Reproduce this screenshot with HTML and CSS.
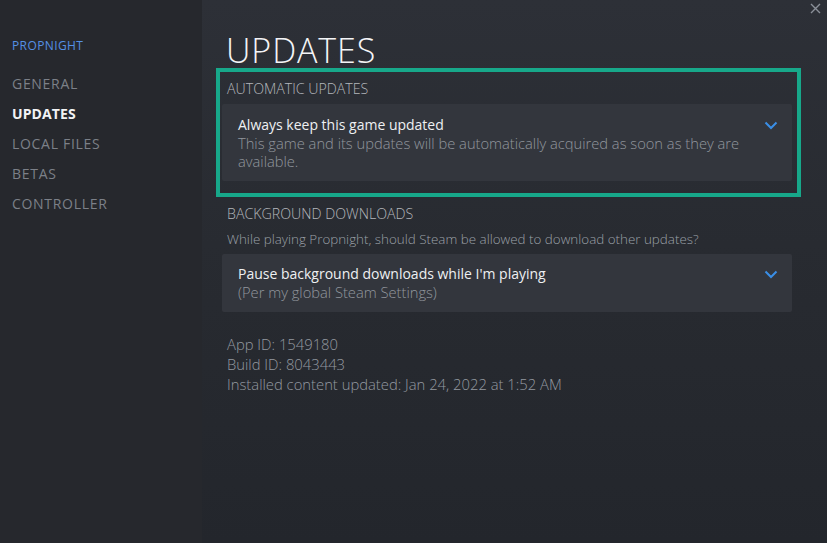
FILE: index.html
```html
<!DOCTYPE html>
<html>

<head>
  <title>Propnight - Properties</title>
  <link rel="stylesheet" href="styles.css">
</head>

<body>
  <div class="window">
    <aside class="sidebar">
      <div class="game-title">PROPNIGHT</div>
      <ul class="nav">
        <li>GENERAL</li>
        <li class="active">UPDATES</li>
        <li>LOCAL FILES</li>
        <li>BETAS</li>
        <li>CONTROLLER</li>
      </ul>
    </aside>

    <main class="content">
      <button class="close" title="Close">
        <svg width="11" height="11" viewBox="0 0 11 11">
          <path d="M1 1 L10 10 M10 1 L1 10" stroke="#8b9099" stroke-width="1.4" fill="none" />
        </svg>
      </button>

      <h1>UPDATES</h1>

      <!-- highlighted section -->
      <section class="highlight">
        <div class="section-label">AUTOMATIC UPDATES</div>
        <div class="dropdown">
          <div class="dropdown-text">
            <div class="option-title">Always keep this game updated</div>
            <div class="option-desc">This game and its updates will be automatically acquired as soon as they are available.</div>
          </div>
          <svg class="chevron" width="14" height="9" viewBox="0 0 14 9">
            <path d="M1.5 1.5 L7 7 L12.5 1.5" stroke="#3a8ee6" stroke-width="2" fill="none" />
          </svg>
        </div>
      </section>

      <section class="plain">
        <div class="section-label">BACKGROUND DOWNLOADS</div>
        <div class="section-help">While playing Propnight, should Steam be allowed to download other updates?</div>
        <div class="dropdown short">
          <div class="dropdown-text">
            <div class="option-title">Pause background downloads while I'm playing</div>
            <div class="option-desc">(Per my global Steam Settings)</div>
          </div>
          <svg class="chevron" width="14" height="9" viewBox="0 0 14 9">
            <path d="M1.5 1.5 L7 7 L12.5 1.5" stroke="#3a8ee6" stroke-width="2" fill="none" />
          </svg>
        </div>
      </section>

      <div class="info">
        <div>App ID: 1549180</div>
        <div>Build ID: 8043443</div>
        <div>Installed content updated: Jan 24, 2022 at 1:52 AM</div>
      </div>
    </main>
  </div>
</body>

</html>
```

FILE: styles.css
```css
html,
body {
  margin: 0;
  height: 100%;
}

body {
  font-family: 'Open Sans', 'Noto Sans', sans-serif;
  background-color: #25272c;
  color: #fff;
}

.window {
  display: flex;
  height: 543px;
}

/* Sidebar */
.sidebar {
  width: 202px;
  flex-shrink: 0;
  background-color: #26282d;
  padding: 39px 0 0 12px;
  box-sizing: border-box;
}

.game-title {
  color: #5590e4;
  font-size: 12px;
  line-height: 14px;
  letter-spacing: 0.4px;
  margin-bottom: 16px;
}

.nav {
  list-style-type: none;
  margin: 0;
  padding: 0;
}

.nav li {
  color: #7c8088;
  font-size: 14px;
  line-height: 30px;
  letter-spacing: 0.7px;
}

.nav li.active {
  color: #f2f3f5;
  font-weight: bold;
  letter-spacing: 0.1px;
}

/* Main panel */
.content {
  position: relative;
  flex: 1;
  padding: 0 35px 0 20px;
  background: linear-gradient(180deg, #2d3037 0%, #282b31 45%, #23262c 100%);
}

.close {
  position: absolute;
  top: 2px;
  right: 6px;
  background: none;
  border: none;
  padding: 0;
  width: 11px;
  height: 11px;
  cursor: pointer;
}

h1 {
  margin: 30px 0 0 4px;
  font-size: 34px;
  line-height: 40px;
  font-weight: 300;
  letter-spacing: 0.9px;
  color: #f4f5f7;
}

.section-label {
  padding-left: 5px;
  font-size: 14.2px;
  line-height: 18px;
  font-weight: 300;
  color: #b4b7bc;
}

.section-help {
  padding-left: 5px;
  margin-top: 7px;
  font-size: 13.4px;
  line-height: 18px;
  font-weight: 300;
  color: #9ba0a7;
}

/* the teal marker around the first section */
.highlight {
  margin: -2px -9px 0 -6px;
  border: 4px solid #17a88a;
  padding: 8px 5px 12px 2px;
}

.plain {
  margin-top: 8px;
}

.dropdown {
  display: flex;
  justify-content: space-between;
  align-items: flex-start;
  margin-top: 6px;
  background-color: #33363d;
  border-radius: 2px;
  padding: 12px 14px 11px 16px;
}

.dropdown.short {
  margin-top: 6px;
  padding: 11px 14px 11px 16px;
}

.dropdown-text {
  max-width: 520px;
}

.option-title {
  font-size: 14px;
  line-height: 18px;
  color: #eef0f2;
}

.option-desc {
  font-size: 14.7px;
  line-height: 18px;
  font-weight: 300;
  color: #92979e;
}

.chevron {
  margin-top: 5px;
}

.info {
  margin-top: 22px;
  padding-left: 5px;
  font-size: 14.8px;
  line-height: 20px;
  font-weight: 300;
  color: #9499a0;
}
```
